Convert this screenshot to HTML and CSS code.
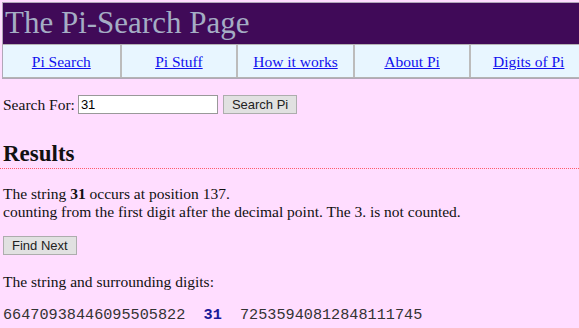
FILE: index.html
```html
<!DOCTYPE html>
<html lang="en">

<head>
    <meta charset="UTF-8" />
    <title>The Pi-Search Page</title>
    <link rel="stylesheet" href="styles.css">
</head>

<body>

    <!-- header -->
    <div class="banner">
        <div class="title">The Pi-Search Page</div>
        <div class="menu">
            <div class="cell"><a href="#">Pi Search</a></div>
            <div class="cell"><a href="#">Pi Stuff</a></div>
            <div class="cell"><a href="#">How it works</a></div>
            <div class="cell"><a href="#">About Pi</a></div>
            <div class="cell"><a href="#">Digits of Pi</a></div>
        </div>
    </div>

    <div class="content">
        <form class="search">
            <label for="q">Search For:</label>
            <input type="text" id="q" class="field" value="31">
            <button type="button" class="btn">Search Pi</button>
        </form>

        <h2 class="results">Results</h2>

        <p class="found">The string <b>31</b> occurs at position 137.<br>counting from the first digit after the decimal point. The 3. is not counted.</p>

        <button type="button" class="btn next">Find Next</button>

        <p class="around">The string and surrounding digits:</p>
        <p class="digits">66470938446095505822  <b>31</b>  72535940812848111745</p>
    </div>

</body>

</html>
```

FILE: styles.css
```css
html {
    overflow: hidden;
}

body {
    margin: 0;
    padding: 2px 0 0 0;
    background-color: #ffddff;
    font-family: "Liberation Serif", "Times New Roman", serif;
    font-size: 15.5px;
    color: #111;
}

.banner {
    width: 583px;
    margin-left: 2px;
    border: 1px solid #b0a8b8;
    border-right: none;
}

.title {
    background-color: #400a58;
    color: #a4adc4;
    font-size: 31px;
    height: 41px;
    line-height: 40px;
    padding-left: 2px;
}

.menu {
    display: grid;
    grid-template-columns: repeat(5, 1fr);
    background-color: #e8f6ff;
    border-top: 1px solid #b4b4b4;
    border-bottom: 1px solid #b4b4b4;
}

.cell {
    text-align: center;
    height: 32px;
    line-height: 34px;
    border-left: 2px solid #bcbcbc;
}

.cell:first-child {
    border-left: none;
}

.cell a {
    color: #1010ee;
    font-size: 15.5px;
}

.content {
    padding: 0 3px;
}

.search {
    margin: 16px 0 0 0;
    display: flex;
    align-items: center;
}

.search label {
    margin-right: 3px;
}

.field {
    width: 140px;
    height: 19px;
    box-sizing: border-box;
    border: 1px solid #999;
    padding: 0 2px;
    font-family: "Liberation Sans", Arial, sans-serif;
    font-size: 13px;
    margin: 0 5px 0 0;
}

.btn {
    font-family: "Liberation Sans", Arial, sans-serif;
    font-size: 13px;
    color: #222;
    background-color: #e1e1e1;
    border: 1px solid #adadad;
    height: 19px;
    padding: 0 8px;
    margin: 0;
}

.results {
    font-size: 23px;
    margin: 27px -3px 0 -3px;
    padding: 0 3px 1px 3px;
    border-bottom: 1px dotted #ff5a6a;
}

.found {
    margin: 16px 0 15px 0;
    line-height: 18px;
}

.next {
    padding: 0 8px;
}

.around {
    margin: 18px 0 0 0;
}

.digits {
    font-family: "Liberation Mono", "Courier New", monospace;
    font-size: 15.2px;
    color: #333;
    white-space: pre;
    margin: 15px 0 0 0;
}

.digits b {
    color: #1a1a99;
}
```
